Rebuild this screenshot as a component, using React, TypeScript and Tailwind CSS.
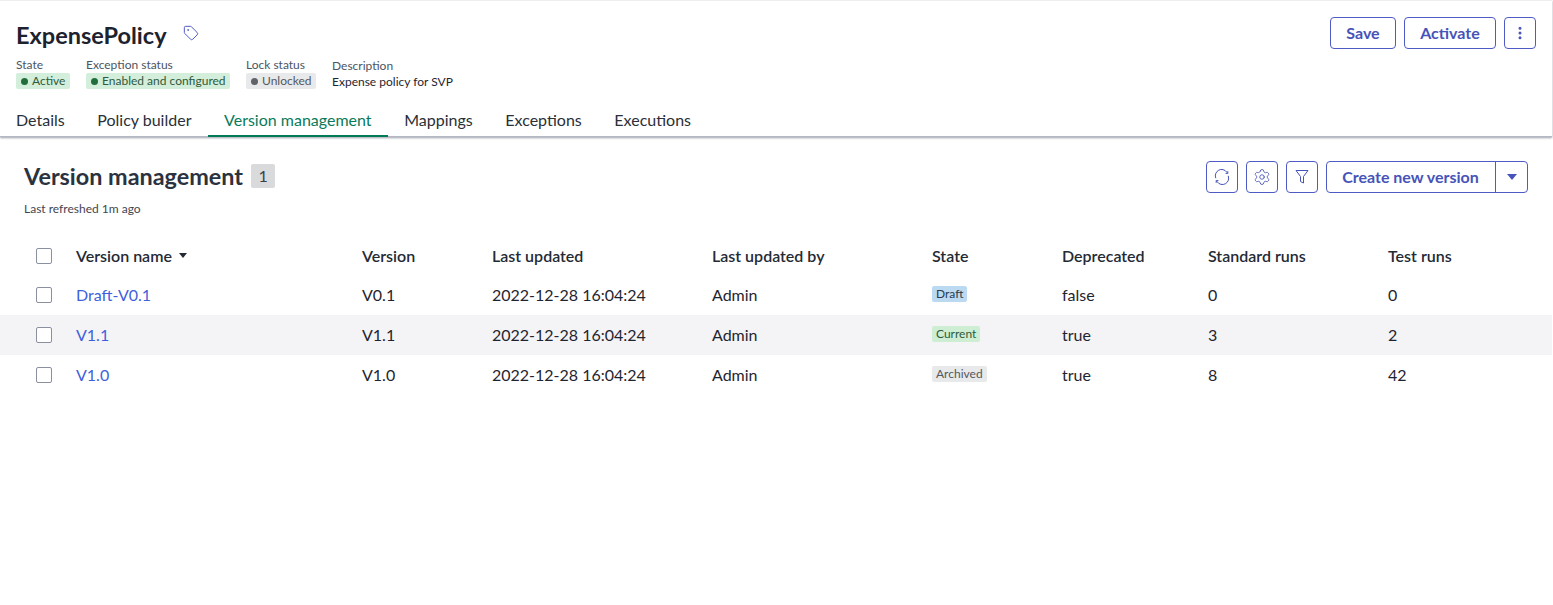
import { EllipsisVertical, Settings, Tag } from "lucide-react";

const INDIGO = "border-[#4f5bc4] text-[#4653b8]";
const COLS = "mr-px grid grid-cols-[76px_286px_130px_220px_220px_130px_146px_180px_1fr] items-center";

const TABS = ["Details", "Policy builder", "Version management", "Mappings", "Exceptions", "Executions"];

const ROWS = [
  { name: "Draft-V0.1", version: "V0.1", state: "Draft", deprecated: "false", standard: 0, test: 0 },
  { name: "V1.1", version: "V1.1", state: "Current", deprecated: "true", standard: 3, test: 2 },
  { name: "V1.0", version: "V1.0", state: "Archived", deprecated: "true", standard: 8, test: 42 },
];

const STATE_STYLE: Record<string, string> = {
  Draft: "bg-[#bbdaf2] text-[#2b3a4a]",
  Current: "bg-[#cdeed3] text-[#2f5a3c]",
  Archived: "bg-[#e8e9ea] text-[#55585c]",
};

function Meta({ label, children, className }: { label: string; children: React.ReactNode; className?: string }) {
  return (
    <div className={className}>
      <div className="text-[12px] leading-[14px] text-[#4b5563]">{label}</div>
      {children}
    </div>
  );
}

function Pill({ color, dot, children }: { color: string; dot: string; children: React.ReactNode }) {
  return (
    <div className={`mt-px flex h-4 items-center gap-1 rounded-[2px] pl-[5px] pr-[4.5px] text-[12px] ${color}`}>
      <span className={`size-[7px] rounded-full ${dot}`} />
      {children}
    </div>
  );
}

function IconButton({ children }: { children: React.ReactNode }) {
  return (
    <button type="button" className={`flex size-8 items-center justify-center rounded-[4px] border ${INDIGO}`}>
      {children}
    </button>
  );
}

function Checkbox() {
  return <span className="ml-9 block size-4 rounded-[2px] border border-[#8a90a0] bg-white" />;
}

export default function App() {
  return (
    <div className="min-h-[605px] bg-white font-['Lato','Liberation_Sans',sans-serif] text-[#1f2530]">
      <header className="mr-px flex h-[137px] flex-col border-t border-[#eeeeee] shadow-[inset_0_-1px_0_#b4b7c4,0_1px_2px_rgba(40,45,70,0.45)]">
        <div className="flex flex-1 justify-between px-4">
          <div>
            <div className="mt-[19px] flex h-[30px] items-center">
              <h1 className="text-[23.5px] font-bold leading-[30px] text-[#1d232e]">ExpensePolicy</h1>
              <Tag className="mb-1 ml-4 size-4 text-[#4f5bc4]" strokeWidth={1.5} />
            </div>
            <div className="mt-[8px] flex">
              <Meta label="State" className="w-[70px]">
                <div className="flex">
                  <Pill color="bg-[#d3eeda] text-[#2f5a3c]" dot="bg-[#216e3a]">Active</Pill>
                </div>
              </Meta>
              <Meta label="Exception status" className="w-[160px]">
                <div className="flex">
                  <Pill color="bg-[#d3eeda] text-[#2f5a3c]" dot="bg-[#216e3a]">Enabled and configured</Pill>
                </div>
              </Meta>
              <Meta label="Lock status" className="w-[86px]">
                <div className="flex">
                  <Pill color="bg-[#e8e9ea] text-[#55585c]" dot="bg-[#5f6368]">Unlocked</Pill>
                </div>
              </Meta>
              <div className="mt-px">
                <div className="text-[12px] leading-[14px] text-[#4b5563]">Description</div>
                <div className="mt-px text-[12px] leading-4 text-[#1f2530]">Expense policy for SVP</div>
              </div>
            </div>
          </div>
          <div className="mt-4 flex gap-2">
            <button type="button" className={`h-8 w-[66px] rounded-[4px] border text-[16px] font-bold ${INDIGO}`}>
              Save
            </button>
            <button type="button" className={`h-8 w-[92px] rounded-[4px] border text-[16px] font-bold ${INDIGO}`}>
              Activate
            </button>
            <IconButton>
              <EllipsisVertical className="size-4" strokeWidth={2.5} />
            </IconButton>
          </div>
        </div>
        <nav className="flex">
          {TABS.map((tab) => {
            const active = tab === "Version management";
            return (
              <div
                key={tab}
                className={`flex h-[32px] items-center border-b-2 pl-4 pr-[16.6px] text-[16px] ${
                  active ? "border-[#007a55] text-[#0a7a5a]" : "border-transparent text-[#2a2f38]"
                }`}
              >
                {tab}
              </div>
            );
          })}
        </nav>
      </header>

      <main>
        <div className="flex items-start justify-between pl-6 pr-[25px] pt-[24px]">
          <div className="pt-px">
            <div className="flex h-7 items-center gap-2">
              <h2 className="text-[23.4px] font-bold leading-7 text-[#2b3240]">Version management</h2>
              <span className="flex h-6 w-6 items-center justify-center rounded-[2px] bg-[#d9dadc] text-[16px] text-[#3a3f48]">
                1
              </span>
            </div>
            <p className="mt-[12px] text-[12px] leading-[14px] text-[#3f4652]">Last refreshed 1m ago</p>
          </div>
          <div className="flex gap-2">
            <IconButton>
              <svg viewBox="0 0 16 16" className="size-4" fill="none" stroke="currentColor" strokeWidth="1">
                <path d="M1.8 9.2A6.3 6.3 0 0 1 12.8 3.2L13.6 4.2" />
                <path d="M14.2 6.8A6.3 6.3 0 0 1 3.2 12.8L2.4 11.8" />
                <path d="M13.8 2.2V4.4H11.6" />
                <path d="M2.2 13.8V11.6H4.4" />
              </svg>
            </IconButton>
            <IconButton>
              <Settings className="size-[18px]" strokeWidth={1.15} />
            </IconButton>
            <IconButton>
              <svg viewBox="0 0 16 16" className="size-4" fill="none" stroke="currentColor" strokeWidth="1" strokeLinejoin="round">
                <path d="M2 1.5H14L9.5 7.5V14L6.5 12.5V7.5Z" />
              </svg>
            </IconButton>
            <div className={`flex h-8 rounded-[4px] border ${INDIGO}`}>
              <button type="button" className="w-[169px] border-r border-[#4f5bc4] pr-px text-[16px] font-bold">
                Create new version
              </button>
              <button type="button" className="flex w-[31px] items-center justify-center">
                <span className="h-0 w-0 border-x-[5px] border-t-[6px] border-x-transparent border-t-[#4653b8]" />
              </button>
            </div>
          </div>
        </div>

        <div className="mt-[20px] text-[16px]">
          <div className={`${COLS} h-[39px] font-semibold text-[#242a35]`}>
            <Checkbox />
            <div className="flex items-center gap-[7px]">
              Version name
              <span className="h-0 w-0 border-x-[4px] border-t-[5px] border-x-transparent border-t-[#242a35]" />
            </div>
            <div>Version</div>
            <div>Last updated</div>
            <div>Last updated by</div>
            <div>State</div>
            <div>Deprecated</div>
            <div>Standard runs</div>
            <div>Test runs</div>
          </div>
          {ROWS.map((row, i) => (
            <div key={row.name} className={`${COLS} h-10 ${i === 1 ? "bg-[#f4f4f6]" : ""}`}>
              <Checkbox />
              <a className="text-[#3f5fdc]">{row.name}</a>
              <div>{row.version}</div>
              <div>2022-12-28 16:04:24</div>
              <div>Admin</div>
              <div className="flex">
                <span className={`mb-[3px] flex h-4 items-center rounded-[2px] px-1 text-[12px] ${STATE_STYLE[row.state]}`}>
                  {row.state}
                </span>
              </div>
              <div>{row.deprecated}</div>
              <div>{row.standard}</div>
              <div>{row.test}</div>
            </div>
          ))}
        </div>
      </main>
    </div>
  );
}
